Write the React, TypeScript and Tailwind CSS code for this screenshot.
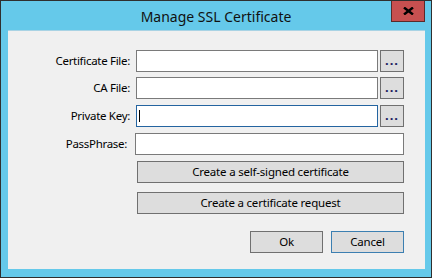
import React from "react";

const font = { fontFamily: '"Noto Sans", "Open Sans", sans-serif' };

function Row({ label, focused, browse, lw, gap }: { label: string; focused?: boolean; browse?: boolean; lw?: string; gap?: string }) {
  return (
    <div className="flex h-[22px] items-center">
      <div className={`${lw ?? "w-[122px]"} text-right text-[11.5px] tracking-[-0.3px] text-[#000] leading-none`}>{label}</div>
      <div
        className={`${gap ?? "ml-[6px]"} h-[22px] flex-1 bg-white border ${
          focused ? "border-[#2464a0]" : "border-[#7a7a7a]"
        } flex items-center`}
      >
        {focused && <div className="ml-[2px] w-px h-[12px] bg-black" />}
      </div>
      {browse && (
        <div className="ml-[2px] w-[24px] h-[22px] bg-[#dddddd] border border-[#707070] flex items-end justify-center pb-[4px] text-[13px] font-bold leading-none text-[#1a1a60] tracking-[1px]">
          ...
        </div>
      )}
    </div>
  );
}

const btn = "bg-[#dddddd] border flex items-center justify-center text-[11.5px] tracking-[-0.2px] text-black";

export default function App() {
  return (
    <div style={font} className="relative w-[432px] h-[278px] bg-[#65c9ea] border border-[#2f2f2f] flex flex-col">
      <div className="h-[29px] flex items-center justify-center text-[14px] text-[#111] pt-[2px]">Manage SSL Certificate</div>
      <div className="absolute top-0 right-[6px] w-[34px] h-[21px] bg-[#c75050] border border-t-0 border-[#5a2a2a] flex items-center justify-center">
        <svg width="11" height="8" viewBox="0 0 11 8">
          <path d="M1 0.5 L10 7.5 M10 0.5 L1 7.5" stroke="#000" strokeWidth="2.4" />
        </svg>
      </div>
      <div className="ml-[7px] mr-[6px] h-[239px] bg-[#f0f0f0] border-t border-[#a9d3e4] pr-[21px] pt-[19px] flex flex-col">
        <Row label="Certificate File:" browse />
        <div className="h-[5px]" />
        <Row label="CA File:" browse />
        <div className="h-[6px]" />
        <Row label="Private Key:" browse focused />
        <div className="h-[6px]" />
        <Row label="PassPhrase:" lw="w-[119px]" gap="ml-[8px]" />
        <div className="ml-[129px] mt-[6px] flex flex-col">
          <div className={`h-[22px] border-[#707070] ${btn}`}>Create a self-signed certificate</div>
          <div className={`h-[22px] mt-[9px] border-[#707070] ${btn}`}>Create a certificate request</div>
        </div>
        <div className="mt-[17px] flex justify-end gap-[8px]">
          <div className={`w-[73px] h-[22px] border-[#707070] ${btn}`}>Ok</div>
          <div className={`w-[73px] h-[22px] border-[#3c7fb1] ${btn}`}>Cancel</div>
        </div>
      </div>
    </div>
  );
}
